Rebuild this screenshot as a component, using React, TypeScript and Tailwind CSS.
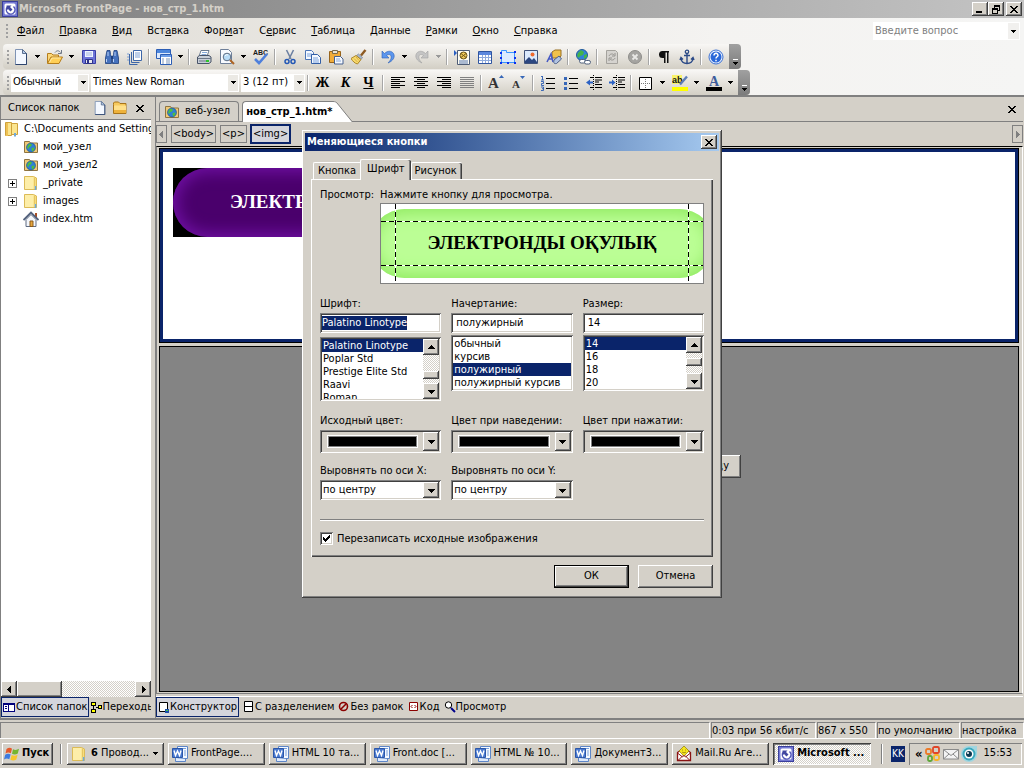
import { useState } from 'react'
import type { ReactNode } from 'react'
import clsx from 'clsx'

const RAISED =
  'bg-[#d4d0c8] shadow-[inset_-1px_-1px_#404040,inset_1px_1px_#fff,inset_-2px_-2px_#808080]'
const SUNKEN =
  'p-[2px] shadow-[inset_1px_1px_#808080,inset_-1px_-1px_#fff,inset_2px_2px_#404040,inset_-2px_-2px_#d4d0c8]'
const CHECKER =
  'bg-[repeating-conic-gradient(#fff_0_25%,#d4d0c8_0_50%)] bg-[length:2px_2px]'

function Svg({ size = 16, children }: { size?: number; children: ReactNode }) {
  return (
    <svg width={size} height={size} viewBox="0 0 16 16" fill="none" className="shrink-0" aria-hidden="true">
      {children}
    </svg>
  )
}

function Arrow({ dir = 'down', color = '#000' }: { dir?: 'up' | 'down' | 'left' | 'right'; color?: string }) {
  const paths = {
    down: 'M0 2h7v1H6v1H5v1H4v1H3V5H2V4H1V3H0z',
    up: 'M3 1h1v1h1v1h1v1h1v1H0V4h1V3h1V2h1z',
    left: 'M5 0v7H4V6H3V5H2V4H1V3h1V2h1V1h1V0z',
    right: 'M2 0v7h1V6h1V5h1V4h1V3H5V2H4V1H3V0z',
  }
  return (
    <svg width="7" height="7" viewBox="0 0 7 7" shapeRendering="crispEdges" className="shrink-0" aria-hidden="true">
      <path d={paths[dir]} fill={color} />
    </svg>
  )
}

function SmallArrow({ color = '#000' }: { color?: string }) {
  return (
    <svg width="5" height="3" viewBox="0 0 5 3" shapeRendering="crispEdges" className="shrink-0" aria-hidden="true">
      <path d="M0 0h5v1H4v1H3v1H2V2H1V1H0z" fill={color} />
    </svg>
  )
}

function Cross() {
  return (
    <svg width="8" height="7" viewBox="0 0 8 7" shapeRendering="crispEdges" aria-hidden="true">
      <path
        d="M0 0h2v1h1v1h2V1h1V0h2v1H7v1H6v1H5v1h1v1h1v1h1v1H6V6H5V5H3v1H2v1H0V6h1V5h1V4h1V3H2V2H1V1H0z"
        fill="#000"
      />
    </svg>
  )
}

const FOLDER = (
  <>
    <path d="M1.500 4.500V3l1-1h4l1.500 1.500h6v10h-12.500z" fill="#f7c95c" stroke="#a8741b" />
    <path d="M2 5.500h12v7.500H2z" fill="#ffe08a" />
    <path d="M2 10h12v3H2z" fill="#eeb23b" />
  </>
)

const PAGE = (
  <>
    <path d="M2.500 .5h7l4 4v11h-11z" fill="#f4f8ff" stroke="#7f93b4" />
    <path d="M9.500 .5v4h4z" fill="#b8cdec" stroke="#5c708f" />
    <path d="M13.500 4.500v11h-11" stroke="#2e456e" />
  </>
)

const GLOBE = (
  <>
    <circle cx="8" cy="8.500" r="4.500" fill="#2f7fd6" stroke="#134a8c" strokeWidth=".6" />
    <path d="M5 6l2-1.500 2 1-1 2-2 .5-.5 2-1.500-1zM8.500 9l3-.5-.5 2.500-2 1.500z" fill="#4fbf3d" />
  </>
)

const icons: Record<string, ReactNode> = {
  page: PAGE,
  folder: FOLDER,
  open: (
    <>
      <path d="M.5 14V4.500h4l1.500 1.500h5.500v2" fill="#fbd779" stroke="#b57d1c" />
      <path d="M.5 14.500l3.500-6.500h11.500l-3.500 6.500z" fill="#ffcf56" stroke="#b57d1c" />
      <path d="M2.500 13.500l2.500-4.500h8.500" stroke="#ffe9a6" />
      <path d="M8 3.500c2-2.500 4-2 5.500 0M14.500 1v3.500H11" stroke="#6f7886" />
    </>
  ),
  save: (
    <>
      <path d="M1.500 1.500h13v13h-12l-1-1z" fill="#6d74d8" stroke="#3a3fa6" />
      <path d="M4 2h8v6H4z" fill="#eef3ff" />
      <path d="M5 4h6M5 6h6" stroke="#a3b2de" />
      <path d="M4.500 10.500h7v4h-7z" fill="#e8e8f0" stroke="#2d3288" />
      <path d="M6 11h2v3H6z" fill="#2d3288" />
    </>
  ),
  find: (
    <>
      <path d="M3 1.500h3l.5 4 1 2.500v6.500h-6V9zM10 1.500h3L14.500 9v5.500h-6V8l1-2.500z" fill="#4672bd" stroke="#1d3f7d" strokeWidth=".8" />
      <path d="M7 7h2v3H7z" fill="#1d3f7d" />
      <path d="M2.500 10v3M9.500 10v3M4 3v4M11 3v4" stroke="#b9d1f7" />
    </>
  ),
  pages: (
    <>
      <path d="M6.500 1.500h8v10h-8z" fill="#fff" stroke="#3d66a8" />
      <path d="M4.500 3v10.500h8M2.500 5v10.500h8" stroke="#3d66a8" />
      <path d="M8 4h5M8 6h5M8 8h5M0 5h2M0 8h2M0 11h2" stroke="#7fa0d4" />
    </>
  ),
  layoutPane: (
    <>
      <path d="M.5 .5h14v9H.5z" fill="#dce9fc" stroke="#2b5db5" />
      <path d="M1 1h13v3H1z" fill="#4c86dc" />
      <path d="M4.500 5.500h11v10h-11z" fill="#fff" stroke="#2b5db5" />
      <path d="M5 6h10v2H5z" fill="#6d9ee8" />
      <path d="M6 10h2M10 10h4M6 12h2M10 12h4M6 14h2M10 14h4" stroke="#7d95ba" />
    </>
  ),
  print: (
    <>
      <path d="M5 1.500h8l-2 6H3z" fill="#fff" stroke="#6a7a90" />
      <path d="M6 3.500h5M5.500 5.500h5" stroke="#86a9d8" />
      <path d="M1.500 8l2-1.500h9.500l2 1.500v5l-2 1.500H1.500z" fill="#c9cfd8" stroke="#495468" />
      <path d="M2 9.500h13M3 12h7" stroke="#6c7787" />
      <path d="M10 11h3v2h-3z" fill="#2fc62c" />
    </>
  ),
  preview: (
    <>
      <path d="M1.500 .5h8l3 3v11h-11z" fill="#f7faff" stroke="#6e7f99" />
      <circle cx="8" cy="8" r="3.800" fill="#b7dbf7" stroke="#5c6d84" />
      <path d="M11 11l4 4" stroke="#ad6424" strokeWidth="2" />
      <path d="M6 7c1-1.500 2-1.500 3-1" stroke="#fff" />
    </>
  ),
  spell: (
    <>
      <text x="0" y="6" fontSize="7" fontWeight="bold" fill="#1a1a1a" fontFamily="Liberation Sans, sans-serif">
        ABC
      </text>
      <path d="M2 10l4 4L14 5" stroke="#4f80dc" strokeWidth="2.600" />
    </>
  ),
  cut: (
    <>
      <path d="M4.500 1l4.500 9M11.500 1L7 10" stroke="#6f82a3" strokeWidth="1.600" />
      <circle cx="5" cy="12.500" r="2" stroke="#2458b5" strokeWidth="1.500" />
      <circle cx="11" cy="12.500" r="2" stroke="#2458b5" strokeWidth="1.500" />
    </>
  ),
  copy: (
    <>
      <path d="M.5 1.500h6l2 2v7h-8z" fill="#f5f9ff" stroke="#4c75b6" />
      <path d="M2 5h5M2 7h5" stroke="#7ba2dd" />
      <path d="M6.500 5.500h6l3 3v6h-9z" fill="#f5f9ff" stroke="#335fa6" />
      <path d="M8 9h5M8 11h6M8 13h6" stroke="#7ba2dd" />
    </>
  ),
  paste: (
    <>
      <path d="M1.500 2.500h11v11h-11z" fill="#f0ac3a" stroke="#98641a" />
      <path d="M4.500 1.500h5v3h-5z" fill="#e9e4d6" stroke="#7b6b4b" />
      <path d="M6.500 7.500h6l2.500 2.500v5h-8.500z" fill="#f5f9ff" stroke="#46618f" />
      <path d="M8 10h4M8 12h5" stroke="#8baada" />
    </>
  ),
  brush: (
    <>
      <path d="M14.500 1L10 6.500" stroke="#8d5a22" strokeWidth="2.400" />
      <path d="M7.500 5l4 3.500-1.500 2-4.500-4z" fill="#a9b6ca" stroke="#66738a" strokeWidth=".6" />
      <path d="M5 6.500l5 4-3.500 4.500c-2.500-.5-5-3-6.500-5.500z" fill="#f9dc6d" stroke="#ab8326" />
      <path d="M3 9.500l3.500 3.500M5 8l3 3.500" stroke="#d6ab45" />
    </>
  ),
  undo: (
    <path d="M2 2v7h7L6.500 6.500C9 4.500 12 5.500 11 9.500c-.4 1.500-1.500 3-3 4.500C13 12 15.500 8 13.500 4.500 11.500 1.500 7.500 1.500 4.500 4.500z" fill="#5c96ee" stroke="#2c5fb5" strokeWidth=".6" />
  ),
  redo: (
    <path d="M14 2v7H7l2.500-2.500C7 4.500 4 5.500 5 9.500c.4 1.500 1.500 3 3 4.500C3 12 .5 8 2.500 4.500 4.500 1.500 8.500 1.500 11.500 4.500z" fill="#c4c4c4" stroke="#a2a2a2" strokeWidth=".6" />
  ),
  component: (
    <>
      <path d="M3.500 1.500h12v14h-12z" fill="#fffdf2" stroke="#4d5b74" />
      <path d="M0 1l3 3-3 3z" fill="#2a5fc2" />
      <path d="M5 12h9M5 14h9" stroke="#5676ae" />
      <circle cx="9.500" cy="6.500" r="3.500" fill="#efc95a" stroke="#6d5519" />
      <path d="M7 4.500l5 4M12 4.500l-5 4" stroke="#6d5519" />
    </>
  ),
  table: (
    <>
      <path d="M1.500 2.500h13v12h-13z" fill="#fff" stroke="#2f55a0" />
      <path d="M2 3h12v3H2z" fill="#5c88dd" />
      <path d="M2 8.500h12M2 11.500h12M5.500 6v8M8.500 6v8M11.500 6v8" stroke="#8fabdd" />
    </>
  ),
  layer: (
    <>
      <path d="M1.500 4.500V1.500h5v2h8v10h-13z" fill="#dcebff" stroke="#3a96ff" />
      <path d="M0 3h2v2H0zM14 2h2v2h-2zM0 13h2v2H0zM7 13h2v2H7zM14 13h2v2h-2zM14 8h2v2h-2zM0 8h2v2H0z" fill="#0a2ff0" />
    </>
  ),
  picture: (
    <>
      <path d="M1.500 1.500h13v13h-13z" fill="#dceafd" stroke="#41537a" />
      <circle cx="9.500" cy="5.500" r="2" fill="#ef6a2e" />
      <path d="M2 12l4-4 3 3 2-2 3 4v1H2z" fill="#2c4780" />
    </>
  ),
  drawing: (
    <>
      <path d="M6 3l3-2h6v6l-2 2H6z" fill="#f1c24c" stroke="#997022" />
      <path d="M1 13L5 5l2 8M2.500 10h4" stroke="#4a5cc4" strokeWidth="1.600" />
      <path d="M8 11l5-4 2.500 3-5 4.500c-3 .5-3-1-2.500-3.500z" fill="#b2c4e2" stroke="#4c5f87" />
    </>
  ),
  hyperlink: (
    <>
      <circle cx="7" cy="6" r="5.500" fill="#3183d8" stroke="#205a9a" />
      <path d="M3 4l3-3 3 2-1 3-3 1-1 2-2-2zM9 6l3-1v3l-3 2z" fill="#43b34a" />
      <rect x="4.500" y="10.500" width="6" height="3.500" rx="1.700" fill="#fff" stroke="#4f607c" />
      <rect x="9.500" y="11.500" width="6" height="3.500" rx="1.700" fill="#fff" stroke="#4f607c" />
    </>
  ),
  refresh: (
    <>
      <path d="M2.500 1.500h9l2 2v11h-11z" fill="#d5d3cf" stroke="#a4a29d" />
      <path d="M5 7c1-2.500 4-2.500 5-1M11 4v3H8M11 9c-1 2.500-4 2.500-5 1M5 12V9h3" stroke="#969490" />
    </>
  ),
  stop: (
    <>
      <circle cx="8" cy="8" r="6.500" fill="#a5a4a1" stroke="#8e8d8a" />
      <path d="M5.500 5.500l5 5M10.500 5.500l-5 5" stroke="#e9e8e6" strokeWidth="1.800" />
    </>
  ),
  pilcrow: (
    <path d="M13 2H6.500a3.500 3.500 0 000 7H8v5h1.500V3.500H11V14h1.500V3.500H13z" fill="#111" />
  ),
  anchor: (
    <>
      <circle cx="8" cy="2.800" r="1.700" stroke="#2b4a87" strokeWidth="1.300" />
      <path d="M8 4.500v10M5 6.500h6M2 9.500c.5 3.500 3 5 6 5s5.500-1.500 6-5M1 11l1-2.500L4 10.500M15 11l-1-2.500-2 2" stroke="#2b4a87" strokeWidth="1.400" />
    </>
  ),
  help: (
    <>
      <circle cx="8" cy="8" r="7" fill="#eef4ff" stroke="#3a70d2" />
      <circle cx="8" cy="8" r="5.500" fill="#2a68d8" />
      <path d="M6 6.500c0-3 4.200-2.700 4 0-.1 1.300-2 1.300-2 3M8 10.700v1.600" stroke="#fff" strokeWidth="1.500" />
    </>
  ),
  alignLeft: <path d="M1 2.500h14M1 4.500h9M1 6.500h14M1 8.500h9M1 10.500h14M1 12.500h9" stroke="#000" />,
  alignCenter: <path d="M1 2.500h14M4 4.500h8M1 6.500h14M4 8.500h8M1 10.500h14M4 12.500h8" stroke="#000" />,
  alignRight: <path d="M1 2.500h14M6 4.500h9M1 6.500h14M6 8.500h9M1 10.500h14M6 12.500h9" stroke="#000" />,
  justify: <path d="M1 2.500h14M1 4.500h14M1 6.500h14M1 8.500h14M1 10.500h14M1 12.500h14" stroke="#808080" />,
  grow: (
    <>
      <text x="0" y="13" fontSize="15" fontWeight="bold" fill="#333" fontFamily="Liberation Serif, serif">
        А
      </text>
      <path d="M11 3l2.500-3L16 3z" fill="#3767b8" />
    </>
  ),
  shrink: (
    <>
      <text x="1" y="13" fontSize="11" fontWeight="bold" fill="#333" fontFamily="Liberation Serif, serif">
        А
      </text>
      <path d="M9 1l2.500 3L14 1z" fill="#3767b8" />
    </>
  ),
  numbered: (
    <>
      <path d="M6 3.500h9M6 8.500h9M6 13.500h9" stroke="#000" />
      <path d="M2.500 1v4M1 1.500h1.500M1 5h3M1 6.500h2.500v2H1.500v2H4M1 12h2.500v3.500H1M2 13.700h1.500" stroke="#2c5db3" strokeWidth=".9" />
    </>
  ),
  bulleted: (
    <>
      <path d="M6 3.500h9M6 8.500h9M6 13.500h9" stroke="#000" />
      <path d="M1 2h3v3H1zM1 7h3v3H1zM1 12h3v3H1z" fill="#3767b8" />
    </>
  ),
  outdent: (
    <>
      <path d="M4 2.500h4M9 2.500h7M9 5h7M9 7h4M9 9.500h7M4 12.500h4M9 12.500h7" stroke="#000" strokeWidth="1.200" />
      <path d="M7.500 0v16" stroke="#000" strokeDasharray="1 1" />
      <path d="M0 7.500l4-3v2h3v2H4v2z" fill="#2c62c4" />
    </>
  ),
  indent: (
    <>
      <path d="M4 2.500h4M9 2.500h7M9 5h7M9 7h4M9 9.500h7M4 12.500h4M9 12.500h7" stroke="#000" strokeWidth="1.200" />
      <path d="M7.500 0v16" stroke="#000" strokeDasharray="1 1" />
      <path d="M6.500 7.500l-3.500-3v2H0v2h3v2z" fill="#2c62c4" />
    </>
  ),
  borders: (
    <>
      <path d="M1.500 2.500h12v12h-12z" fill="#fff" stroke="#000" />
      <path d="M7.500 4v9M3 8.500h9" stroke="#777" strokeDasharray="1 1" />
    </>
  ),
  highlight: (
    <>
      <path d="M0 0h10v9H0z" fill="#f8f36a" />
      <text x="0" y="8" fontSize="9" fill="#111" fontFamily="Liberation Sans, sans-serif">
        ab
      </text>
      <path d="M15 1.500L8 9.500" stroke="#5c7db8" strokeWidth="2.400" />
      <path d="M0 12h16v4H0z" fill="#ffff00" />
    </>
  ),
  fontColor: (
    <>
      <text x="3" y="11" fontSize="14" fontWeight="bold" fill="#3d5c9c" fontFamily="Liberation Serif, serif">
        А
      </text>
      <path d="M0 12h16v4H0z" fill="#000" />
    </>
  ),
  site: (
    <>
      <path d="M1.500 4V2.500h5l1 1.500h7v9.500h-13z" fill="#efca78" stroke="#8f7440" />
      {GLOBE}
    </>
  ),
  closedFolder: (
    <>
      <path d="M1.500 1.500h9l3 1.500v11.500h-12z" fill="#f8dd7c" stroke="#dcbb57" />
      <path d="M2 2h8.500v12H2z" fill="#fdeea9" />
      <path d="M11.500 3v8" stroke="#e5c662" />
      <path d="M12.500 11v4" stroke="#6fa9d6" strokeWidth="1.600" />
    </>
  ),
  openFolder: (
    <>
      <path d="M1.500 1.500h6v13h-6zM7.500 2.500h6v11h-6z" fill="#fbe58f" stroke="#cfa23c" />
      <path d="M2 2h2v13H2z" fill="#eec255" />
      <path d="M11 12v3.500" stroke="#6fa9d6" strokeWidth="2" />
    </>
  ),
  home: (
    <>
      <path d="M3 8.500v7h10v-7L8 3.500z" fill="#f3f6fb" stroke="#5e6b82" />
      <path d="M12 2h2v5h-2z" fill="#a84f23" />
      <path d="M.5 9L8 1.500 15.500 9" stroke="#52617c" strokeWidth="1.800" />
      <path d="M7 10h3v5.500H7z" fill="#e7a63b" stroke="#8a5a1c" />
    </>
  ),
  word: (
    <>
      <path d="M5.500 .5h10v12h-10z" fill="#f5f9ff" stroke="#5d86c8" />
      <path d="M7 2.500h7M12 5h2M12 7h2M12 9h2" stroke="#7ba2dd" />
      <path d="M3.500 12v3.500h10V13" fill="#dfeafb" stroke="#5d86c8" />
      <path d="M.5 2.500h10v9H.5z" fill="#4a7ad0" stroke="#2b56a8" />
      <path d="M2 4.500L3.500 9.500 5.500 5l2 4.500L9 4.500" stroke="#fff" strokeWidth="1.400" />
    </>
  ),
  frontPage: (
    <>
      <rect x=".5" y=".5" width="15" height="15" fill="#7479d2" stroke="#3a3f9c" />
      <rect x="2.500" y="2.500" width="11" height="11" rx="1.500" fill="#fff" />
      <path d="M11.500 5.500a4.300 4.300 0 11-6.500 1" stroke="#5157b8" strokeWidth="1.500" />
      <path d="M4.500 4.500h5L8 6l2.500 2.500-2 2L6 8 4.500 9.500z" fill="#41479f" />
    </>
  ),
  mailAgent: (
    <>
      <path d="M1.500 6.500L8 2l6.500 4.500v8h-13z" fill="#fff" stroke="#8a1414" strokeWidth="1.300" />
      <path d="M8 0l5 5-5 5-5-5z" fill="#f5e61e" stroke="#8f7b0e" strokeWidth=".7" />
      <path d="M1.500 15l5-5h3l5 5M1.500 7l5 4M14.500 7l-5 4" stroke="#8a1414" />
      <path d="M6 4h1M9 4h1M6 6c1 1 3 1 4 0" stroke="#8f7b0e" strokeWidth=".8" />
    </>
  ),
  windows: (
    <>
      <path d="M2.500 3c2-1.500 4-1.500 5.500-.3L6.800 7.300C5 6.200 3.500 6.300 1.500 7.500z" fill="#e5592b" />
      <path d="M9 3.300c2 1 4 .8 6-.5l-1.200 4.700c-2 1.200-3.800 1.300-5.800.2z" fill="#74b52f" />
      <path d="M1.200 8.700c2-1.200 3.600-1.200 5.400-.2l-1.300 4.800C3.500 12.200 2 12.300 0 13.500z" fill="#3d7be0" />
      <path d="M7.700 9c2 1 3.800.9 5.900-.3l-1.300 4.800c-2 1.200-3.900 1.300-5.900.2z" fill="#f6c62b" />
    </>
  ),
  office: (
    <>
      <rect x="1" y="3" width="5" height="5" rx="1.500" stroke="#ec7a28" strokeWidth="1.800" />
      <rect x="8" y="1" width="6" height="6" rx="1.500" stroke="#e0452a" strokeWidth="1.800" />
      <rect x="3" y="10" width="4" height="5" rx="1.500" stroke="#5fa63a" strokeWidth="1.800" />
      <rect x="9" y="9" width="5" height="5" rx="1.500" stroke="#f5b52a" strokeWidth="1.800" />
    </>
  ),
  envelope: (
    <>
      <path d="M.5 3.500h15v9.500H.5z" fill="#f3f3f3" stroke="#8a8a8a" />
      <path d="M.5 3.500L8 9.500l7.500-6M.5 13L6 8M15.500 13L10 8" stroke="#8a8a8a" />
    </>
  ),
  eye: (
    <>
      <path d="M8 0h8v8a8 8 0 11-8-8z" fill="#9fd5e0" />
      <circle cx="8" cy="8" r="6.500" fill="#3aa9be" />
      <circle cx="8" cy="8" r="4.500" fill="#fff" />
      <circle cx="8" cy="8" r="3" fill="#0c3a52" />
      <circle cx="7" cy="7" r="1" fill="#fff" />
    </>
  ),
}

// '|' is a separator, 'v' the drop-down arrow of the button before it
const STANDARD: [string, string][] = [
  ['page', 'Создать'], ['v', 'Создать: список'], ['open', 'Открыть'], ['v', 'Открыть: список'],
  ['save', 'Сохранить'], ['find', 'Найти'], ['pages', 'Опубликовать'], ['|', ''],
  ['layoutPane', 'Область'], ['v', 'Область: список'], ['|', ''],
  ['print', 'Печать'], ['preview', 'Просмотр'], ['v', 'Просмотр: список'], ['spell', 'Орфография'], ['|', ''],
  ['cut', 'Вырезать'], ['copy', 'Копировать'], ['paste', 'Вставить'], ['brush', 'Формат по образцу'], ['|', ''],
  ['undo', 'Отменить'], ['v', 'Отменить: список'], ['redo', 'Вернуть'], ['vd', 'Вернуть: список'], ['|', ''],
  ['component', 'Веб-компонент'], ['table', 'Таблица'], ['layer', 'Слой'], ['picture', 'Рисунок'],
  ['drawing', 'Рисование'], ['|', ''], ['hyperlink', 'Гиперссылка'], ['|', ''],
  ['refresh', 'Обновить'], ['stop', 'Остановить'], ['|', ''],
  ['pilcrow', 'Показать все'], ['anchor', 'Закладка'], ['|', ''], ['help', 'Справка'],
]

const FORMATTING: [string, string][] = [
  ['|', ''], ['bold', 'Полужирный'], ['italic', 'Курсив'], ['underline', 'Подчеркнутый'], ['|', ''],
  ['alignLeft', 'По левому краю'], ['alignCenter', 'По центру'], ['alignRight', 'По правому краю'],
  ['justify', 'По ширине'], ['|', ''], ['grow', 'Увеличить'], ['shrink', 'Уменьшить'], ['|', ''],
  ['numbered', 'Нумерация'], ['bulleted', 'Маркеры'], ['outdent', 'Уменьшить отступ'],
  ['indent', 'Увеличить отступ'], ['|', ''], ['borders', 'Границы'], ['v', 'Границы: список'],
  ['highlight', 'Выделение'], ['v', 'Выделение: список'], ['fontColor', 'Цвет шрифта'], ['v', 'Цвет: список'],
]

const LETTERS: Record<string, ReactNode> = {
  bold: <span>Ж</span>,
  italic: <span className="italic">К</span>,
  underline: <span className="underline">Ч</span>,
}

function ToolItems({ items }: { items: [string, string][] }) {
  return (
    <>
      {items.map(([id, label], i) => {
        if (id === '|') {
          return (
            <div key={i} className="flex w-[6px] shrink-0 justify-center">
              <div className="h-4 w-[2px] border-r border-white bg-[#a6a6a6]" />
            </div>
          )
        }
        if (id === 'v' || id === 'vd') {
          return (
            <button key={i} aria-label={label} className="flex h-5 w-[11px] shrink-0 items-center justify-center">
              <SmallArrow color={id === 'vd' ? '#999' : '#000'} />
            </button>
          )
        }
        return (
          <button
            key={i}
            aria-label={label}
            className="flex h-5 w-[23px] shrink-0 items-center justify-center font-['Liberation_Serif',serif] text-[14px] font-bold"
          >
            {LETTERS[id] ?? <Svg>{icons[id]}</Svg>}
          </button>
        )
      })}
    </>
  )
}

function Grip() {
  return (
    <div className="flex w-[6px] shrink-0 flex-col items-end gap-[2px]">
      {[0, 1, 2, 3].map((i) => (
        <span key={i} className="h-[2px] w-[2px] bg-[#a0a0a0]" />
      ))}
    </div>
  )
}

function Toolbar({ children }: { children: ReactNode }) {
  return (
    <div className="ml-[3px] flex h-[25px] w-fit items-center overflow-hidden rounded bg-linear-to-b from-[#f8f7f5] to-[#d3cfc5]">
      {children}
      <button
        aria-label="Параметры панели инструментов"
        className="ml-[2px] flex h-full w-3 shrink-0 flex-col items-center justify-end gap-[2px] bg-linear-to-b from-[#a0a0a0] to-[#7c7c7c] pb-1"
      >
        <span className="h-px w-[5px] bg-white" />
        <SmallArrow />
      </button>
    </div>
  )
}

function ToolSelect({ label, value, className }: { label: string; value: string; className: string }) {
  return (
    <div className={clsx('relative flex h-[18px] shrink-0 items-center bg-white', className)}>
      <select aria-label={label} className="h-full w-full appearance-none bg-transparent pl-[2px] pr-3 text-[11px]">
        <option>{value}</option>
      </select>
      <span className="pointer-events-none absolute inset-y-px right-px flex w-[10px] items-center justify-center bg-[#ebe9e4]">
        <SmallArrow />
      </span>
    </div>
  )
}

const MENU: [string, string, string][] = [
  ['', 'Ф', 'айл'], ['', 'П', 'равка'], ['', 'В', 'ид'], ['Вст', 'а', 'вка'], ['Фор', 'м', 'ат'],
  ['С', 'е', 'рвис'], ['', 'Т', 'аблица'], ['', 'Д', 'анные'], ['', 'Р', 'амки'], ['', 'О', 'кно'],
  ['', 'С', 'правка'],
]

function Header() {
  return (
    <header className="shrink-0">
      <div className="flex h-[18px] items-center bg-linear-to-r from-[#808080] to-[#c4c4c4] px-[2px]">
        <Svg>{icons.frontPage}</Svg>
        <h1 className="ml-px text-[11px] font-bold text-[#d4d0c8]">Microsoft FrontPage - нов_стр_1.htm</h1>
        <div className="ml-auto flex">
          <button aria-label="Свернуть" className={clsx('flex h-[14px] w-4 items-end pb-[3px] pl-1', RAISED)}>
            <span className="h-[2px] w-[6px] bg-black" />
          </button>
          <button aria-label="Восстановить" className={clsx('flex h-[14px] w-4 items-center justify-center', RAISED)}>
            <svg width="9" height="9" viewBox="0 0 9 9" fill="none" shapeRendering="crispEdges" aria-hidden="true">
              <path d="M2 0h6v2H2zM0 3h6v2H0z" fill="#000" />
              <path d="M2.500 1v2M7.500 1v4.500H6M.5 4v4.500h5V4" stroke="#000" />
            </svg>
          </button>
          <button aria-label="Закрыть" className={clsx('ml-[2px] flex h-[14px] w-4 items-center justify-center', RAISED)}>
            <Cross />
          </button>
        </div>
      </div>
      <div className="border-b-2 border-[#808080] bg-linear-to-r from-[#dfdcd5] via-[#f4f3f1] via-70% to-[#f5f5f4]">
        <div className="flex h-[26px] items-center pl-[2px] pr-1">
          <Grip />
          <nav className="ml-[9px] flex gap-[15px]">
            {MENU.map(([before, key, after]) => (
              <button key={before + key + after}>
                {before}
                <u>{key}</u>
                {after}
              </button>
            ))}
          </nav>
          <div className="ml-auto flex h-[18px] w-[147px] bg-white">
            <input
              aria-label="Введите вопрос"
              placeholder="Введите вопрос"
              className="min-w-0 flex-1 pl-[2px] text-[11px] outline-none placeholder:text-[#808080]"
            />
            <button aria-label="Список вопросов" className="m-px flex w-[11px] items-center justify-center bg-[#f1f0ee]">
              <SmallArrow />
            </button>
          </div>
        </div>
        <Toolbar>
          <Grip />
          <ToolItems items={STANDARD} />
        </Toolbar>
        <div className="mt-px">
          <Toolbar>
            <Grip />
            <div className="ml-[2px] flex gap-[2px]">
              <ToolSelect label="Стиль" value="Обычный" className="w-[78px]" />
              <ToolSelect label="Шрифт" value="Times New Roman" className="w-[148px]" />
              <ToolSelect label="Размер" value="3 (12 пт)" className="w-[64px]" />
            </div>
            <ToolItems items={FORMATTING} />
          </Toolbar>
        </div>
      </div>
    </header>
  )
}

const TREE = [
  { icon: 'site', name: 'мой_узел' },
  { icon: 'site', name: 'мой_узел2' },
  { icon: 'closedFolder', name: '_private', expandable: true },
  { icon: 'closedFolder', name: 'images', expandable: true },
  { icon: 'home', name: 'index.htm' },
]

function FolderPane() {
  return (
    <aside className="flex w-[151px] shrink-0 flex-col overflow-hidden border-l border-[#808080] bg-white">
      <div className="flex h-[23px] shrink-0 items-center border-b border-[#808080] bg-[#d4d0c8] px-[7px]">
        <h2>Список папок</h2>
        <button aria-label="Новая страница" className="ml-auto">
          <Svg size={14}>{icons.page}</Svg>
        </button>
        <button aria-label="Новая папка" className="ml-[5px]">
          <Svg>{icons.folder}</Svg>
        </button>
        <button aria-label="Закрыть" className="ml-2">
          <Cross />
        </button>
      </div>
      <div className="min-h-0 flex-1 overflow-hidden">
        <div className="flex h-[18px] items-center gap-1 whitespace-nowrap pl-[3px]">
          <Svg>{icons.openFolder}</Svg>
          <span className="min-w-0 overflow-hidden">C:\Documents and Setting</span>
        </div>
        <ul>
          {TREE.map((item) => (
            <li key={item.name} className="flex h-[18px] items-center pl-[7px]">
              {item.expandable ? (
                <button
                  aria-label="Развернуть"
                  className="flex h-[9px] w-[9px] items-center justify-center border border-[#808080]"
                >
                  <svg width="5" height="5" viewBox="0 0 5 5" shapeRendering="crispEdges" className="shrink-0" aria-hidden="true">
                    <path d="M2 0h1v2h2v1H3v2H2V3H0V2h2z" fill="#000" />
                  </svg>
                </button>
              ) : (
                <span className="w-[9px]" />
              )}
              <span className="ml-[6px] mr-1">
                <Svg>{icons[item.icon]}</Svg>
              </span>
              {item.name}
            </li>
          ))}
        </ul>
      </div>
      <div className={clsx('flex h-4 shrink-0', CHECKER)}>
        <button aria-label="Влево" className={clsx('flex w-4 items-center justify-center', RAISED)}>
          <Arrow dir="left" />
        </button>
        <div className={clsx('w-[45px]', RAISED)} />
        <button aria-label="Вправо" className={clsx('ml-auto flex w-4 items-center justify-center', RAISED)}>
          <Arrow dir="right" />
        </button>
      </div>
      <div className="flex h-[21px] shrink-0 whitespace-nowrap bg-[#d4d0c8]">
        <button className="flex h-5 shrink-0 items-center gap-px border border-[#0a246a] bg-[#d4d5dc] px-px">
          <svg width="12" height="9" viewBox="0 0 12 9" shapeRendering="crispEdges" aria-hidden="true">
            <path d="M0 0h12v9H0z" fill="#00007b" />
            <path d="M1 2h4v6H1zM6 2h5v6H6z" fill="#fff" />
            <path d="M2 3h2v1H2zM2 5h2v1H2z" fill="#00007b" />
          </svg>
          Список папок
        </button>
        <button className="ml-[2px] flex h-5 min-w-0 items-center overflow-hidden">
          <svg width="11" height="11" viewBox="0 0 11 11" shapeRendering="crispEdges" className="shrink-0" aria-hidden="true">
            <path d="M0 0h5v4H0zM0 7h5v4H0zM7 3h4v4H7z" fill="#000" />
            <path d="M1 1h3v2H1zM1 8h3v2H1zM8 4h2v2H8z" fill="#ff0" />
            <path d="M2 4h1v3H2zM5 5h2v1H5z" fill="#000" />
          </svg>
          Переходы
        </button>
      </div>
    </aside>
  )
}

const VIEWS: [string, ReactNode][] = [
  ['Конструктор', <><path d="M1.500 1.500h8v9h-8z" fill="#fff" stroke="#000" /><path d="M7 8h4v4H7z" fill="#1d4fa8" /><path d="M8 9h2v1H8z" fill="#3fc13f" /></>],
  ['С разделением', <path d="M1.500 .5h8v10h-8zM1.500 5.500h8" fill="#fff" stroke="#000" />],
  ['Без рамок', <><circle cx="5.500" cy="5.500" r="4" stroke="#8b0000" strokeWidth="1.600" /><path d="M3 8l5-5" stroke="#8b0000" strokeWidth="1.600" /></>],
  ['Код', <><path d="M1.500 1.500h8v8h-8z" fill="#fff" stroke="#8b0000" /><path d="M4.500 4L3 5.500 4.500 7M6.500 4L8 5.500 6.500 7" stroke="#8b0000" /></>],
  ['Просмотр', <><circle cx="4.500" cy="4" r="3.200" fill="#fff" stroke="#000" /><path d="M7 7l4 4" stroke="#00008b" strokeWidth="2" /></>],
]

function Editor() {
  return (
    <main className="ml-1 flex min-w-0 flex-1 flex-col border-l border-[#808080] pr-px">
      <div className="flex h-[25px] shrink-0 items-end border-b border-[#808080] pl-[3px]">
        <button className="flex h-5 items-center rounded-t border border-b-0 border-[#808080] px-1 pr-2">
          <Svg>{icons.site}</Svg>
          <span className="ml-[5px]">веб-узел</span>
        </button>
        <button className="-mb-px ml-[3px] flex h-[21px] items-center rounded-tl border-l border-t border-[#808080] bg-white pl-[3px] font-bold">
          нов_стр_1.htm*
        </button>
        <svg width="20" height="21" viewBox="0 0 20 21" fill="none" className="-mb-px" aria-hidden="true">
          <path d="M0 0c2 0 3 1 4 2l15 19H0z" fill="#fff" />
          <path d="M0 .5c2 0 3 .5 4 1.500l15 18.500" stroke="#808080" />
        </svg>
        <button aria-label="Закрыть документ" className="mb-2 ml-auto mr-[7px]">
          <Cross />
        </button>
      </div>
      <div className="flex h-6 shrink-0 items-center">
        <button aria-label="Назад" className="flex h-[18px] w-[11px] items-center justify-center border border-[#808080]">
          <Arrow dir="left" color="#808080" />
        </button>
        <button className="ml-1 h-[18px] border border-[#808080] px-px">{'<body>'}</button>
        <button className="ml-1 h-[18px] border border-[#808080] px-px">{'<p>'}</button>
        <button className="ml-[3px] h-5 border-2 border-[#0a246a] bg-[#d4d5dc] px-px">{'<img>'}</button>
        <button aria-label="Вперёд" className="ml-auto flex h-[18px] w-[11px] items-center justify-center border border-[#808080]">
          <Arrow dir="right" color="#808080" />
        </button>
      </div>
      <div className="flex min-h-0 flex-1 flex-col border border-t-black border-[#808080] border-r-white py-px pl-[2px] pr-[3px]">
        <div className="h-[195px] shrink-0 overflow-hidden border border-black">
          <div className="h-full border-[3px] border-[#0a246a] bg-white px-[10px] py-4">
            <div className="w-[343px] bg-black">
              <div className="flex h-[69px] items-center justify-center rounded-full bg-[#4a006c] font-['Liberation_Serif',serif] text-[19px] font-bold whitespace-nowrap text-white shadow-[inset_0_0_16px_4px_#7010a4]">
                ЭЛЕКТРОНДЫ ОҚУЛЫҚ
              </div>
            </div>
          </div>
        </div>
        <div className="mt-[3px] flex min-h-0 flex-1 justify-center border border-black bg-[#848484] pt-[108px]">
          <button className={clsx('h-[23px] w-[304px] pr-3 text-right', RAISED)}>ду</button>
        </div>
      </div>
      <div className="mt-[2px] flex h-[22px] shrink-0 items-center gap-1 border-t border-white pb-px">
        {VIEWS.map(([name, icon], i) => (
          <button
            key={name}
            className={clsx(
              'flex h-5 items-center',
              i === 0 && 'border border-[#0a246a] bg-[#d4d5dc] px-px',
            )}
          >
            <svg width="12" height="12" viewBox="0 0 12 12" fill="none" aria-hidden="true">
              {icon}
            </svg>
            {name}
          </button>
        ))}
      </div>
    </main>
  )
}

function ScrollColumn({ space }: { space: string }) {
  return (
    <div className={clsx('flex w-4 shrink-0 flex-col', CHECKER)}>
      <button aria-label="Вверх" className={clsx('flex h-4 shrink-0 items-center justify-center', RAISED)}>
        <Arrow dir="up" />
      </button>
      <div className={space} />
      <div className={clsx('h-2 shrink-0', RAISED)} />
      <button aria-label="Вниз" className={clsx('mt-auto flex h-4 shrink-0 items-center justify-center', RAISED)}>
        <Arrow />
      </button>
    </div>
  )
}

interface PickerProps {
  id: string
  label: string
  options: string[]
  initial: string
  listClass: string
  space?: string
  highlighted?: boolean
}

function Picker({ id, label, options, initial, listClass, space, highlighted }: PickerProps) {
  const [value, setValue] = useState(initial)
  return (
    <div>
      <label htmlFor={id} className="mb-[2px] block leading-[14px]">
        {label}
      </label>
      <div className={clsx('flex h-5 items-center bg-white', SUNKEN)}>
        {highlighted ? (
          <input
            id={id}
            value={value}
            onChange={(e) => setValue(e.target.value)}
            className="field-sizing-content h-[14px] max-w-full bg-[#0a246a] text-white outline-none"
          />
        ) : (
          <input
            id={id}
            value={value}
            onChange={(e) => setValue(e.target.value)}
            className="h-[14px] w-full pl-[3px] outline-none"
          />
        )}
      </div>
      <div className={clsx('flex overflow-hidden bg-white', SUNKEN, listClass)}>
        <div role="listbox" aria-label={label} className="min-w-0 flex-1 overflow-hidden">
          {options.map((o) => (
            <button
              key={o}
              role="option"
              aria-selected={o === value}
              onClick={() => setValue(o)}
              className={clsx(
                'block h-[13px] w-full whitespace-nowrap pl-px text-left leading-[13px]',
                o === value && 'bg-[#0a246a] text-white',
              )}
            >
              {o}
            </button>
          ))}
        </div>
        {space && <ScrollColumn space={space} />}
      </div>
    </div>
  )
}

function ColorPicker({ id, label }: { id: string; label: string }) {
  return (
    <div>
      <label htmlFor={id} className="mb-[2px] block whitespace-nowrap leading-[14px]">
        {label}
      </label>
      <button id={id} className={clsx('flex h-[23px] w-full items-stretch', SUNKEN)}>
        <span className="mx-[5px] my-[3px] flex-1 border border-white bg-black outline-1 -outline-offset-2 outline-[#808080]" />
        <span className={clsx('flex w-4 items-center justify-center', RAISED)}>
          <Arrow />
        </span>
      </button>
    </div>
  )
}

function AxisSelect({ id, label }: { id: string; label: string }) {
  return (
    <div>
      <label htmlFor={id} className="mb-[2px] block whitespace-nowrap leading-[14px]">
        {label}
      </label>
      <div className={clsx('relative h-5 bg-white', SUNKEN)}>
        <select id={id} className="h-full w-full appearance-none pl-px pr-4 outline-none">
          <option>по центру</option>
        </select>
        <span className={clsx('pointer-events-none absolute inset-y-[2px] right-[2px] flex w-4 items-center justify-center', RAISED)}>
          <Arrow />
        </span>
      </div>
    </div>
  )
}

function Preview() {
  return (
    <button className="relative flex h-[81px] w-full items-center justify-center overflow-hidden border border-[#808080] bg-white">
      <span className="-mx-[11px] flex h-[69px] flex-1 shrink-0 items-center justify-center rounded-full bg-[#bbfe95] font-['Liberation_Serif',serif] text-[19px] font-bold whitespace-nowrap shadow-[inset_0_0_16px_4px_#8fe95f]">
        ЭЛЕКТРОНДЫ ОҚУЛЫҚ
      </span>
      <span className="absolute inset-x-0 top-[17px] h-px bg-[repeating-linear-gradient(90deg,#000_0_5px,#fff_5px_8px)]" />
      <span className="absolute inset-x-0 bottom-[17px] h-px bg-[repeating-linear-gradient(90deg,#000_0_5px,#fff_5px_8px)]" />
      <span className="absolute inset-y-0 left-[14px] w-px bg-[repeating-linear-gradient(180deg,#000_0_5px,#fff_5px_8px)]" />
      <span className="absolute inset-y-0 right-[14px] w-px bg-[repeating-linear-gradient(180deg,#000_0_5px,#fff_5px_8px)]" />
    </button>
  )
}

const TAB =
  'rounded-t-[2px] border-l border-t border-white bg-[#d4d0c8] shadow-[inset_-1px_0_#404040,inset_-2px_0_#808080]'

function ButtonsDialog() {
  const [overwrite, setOverwrite] = useState(true)
  return (
    <section
      role="dialog"
      aria-label="Меняющиеся кнопки"
      className={clsx('absolute left-[302px] top-[130px] w-[420px] p-[3px] pb-[10px]', RAISED)}
    >
      <div className="flex h-[18px] items-center bg-linear-to-r from-[#0a246a] to-[#a6caf0] px-[2px]">
        <h2 className="font-bold text-white">Меняющиеся кнопки</h2>
        <button aria-label="Закрыть" className={clsx('ml-auto flex h-[14px] w-4 items-center justify-center', RAISED)}>
          <Cross />
        </button>
      </div>
      <div className="px-[6px] pt-2">
        <div role="tablist" className="flex items-end pl-[2px]">
          <button role="tab" className="h-[17px] rounded-tl-[2px] border-l border-t border-white px-1">
            Кнопка
          </button>
          <button role="tab" aria-selected="true" className={clsx('relative -mb-px h-[21px] px-[6px] pb-[2px]', TAB)}>
            Шрифт
          </button>
          <button role="tab" className={clsx('h-[17px] px-[3px] pr-[5px]', TAB)}>
            Рисунок
          </button>
        </div>
        <div className="border-l border-t border-white pb-3 pl-2 pr-[9px] pt-2 shadow-[inset_-1px_-1px_#404040,inset_-2px_-2px_#808080]">
          <div className="flex">
            <span className="w-[60px] shrink-0 leading-[13px]">Просмотр:</span>
            <div className="min-w-0 flex-1">
              <p className="mb-[2px] leading-[13px]">Нажмите кнопку для просмотра.</p>
              <Preview />
            </div>
          </div>
          <div className="mt-[13px] grid h-[104px] grid-cols-3 gap-[10px]">
            <Picker
              id="font"
              label="Шрифт:"
              initial="Palatino Linotype"
              options={['Palatino Linotype', 'Poplar Std', 'Prestige Elite Std', 'Raavi', 'Roman']}
              listClass="mt-1 h-16"
              space="h-4"
              highlighted
            />
            <Picker
              id="style"
              label="Начертание:"
              initial="полужирный"
              options={['обычный', 'курсив', 'полужирный', 'полужирный курсив']}
              listClass="mt-[2px] h-14"
            />
            <Picker
              id="size"
              label="Размер:"
              initial="14"
              options={['14', '16', '18', '20']}
              listClass="mt-[2px] h-14"
              space="h-[5px]"
            />
          </div>
          <div className="mt-[13px] grid grid-cols-3 gap-[10px]">
            <ColorPicker id="color" label="Исходный цвет:" />
            <ColorPicker id="hover-color" label="Цвет при наведении:" />
            <ColorPicker id="pressed-color" label="Цвет при нажатии:" />
          </div>
          <div className="mt-[11px] grid grid-cols-3 gap-[10px]">
            <AxisSelect id="axis-x" label="Выровнять по оси X:" />
            <AxisSelect id="axis-y" label="Выровнять по оси Y:" />
          </div>
          <hr className="mt-[19px] h-[2px] border-b border-t border-b-white border-t-[#808080]" />
          <label className="mt-[11px] flex items-center gap-1 leading-[13px]">
            <span className={clsx('relative flex h-[13px] w-[13px] bg-white', SUNKEN)}>
              <input
                type="checkbox"
                checked={overwrite}
                onChange={(e) => setOverwrite(e.target.checked)}
                className="peer h-[9px] w-[9px] appearance-none"
              />
              <svg
                viewBox="0 0 7 7"
                shapeRendering="crispEdges"
                className="pointer-events-none absolute left-[3px] top-[3px] hidden h-[7px] w-[7px] peer-checked:block"
                aria-hidden="true"
              >
                <path d="M0 2h1v1h1v1h1V3h1V2h1V1h1V0h1v3H6v1H5v1H4v1H3v1H2V6H1V5H0z" fill="#000" />
              </svg>
            </span>
            Перезаписать исходные изображения
          </label>
        </div>
        <div className="mt-2 flex justify-end gap-[9px]">
          <button className="h-[23px] w-[75px] border border-black bg-[#d4d0c8] shadow-[inset_-1px_-1px_#404040,inset_1px_1px_#fff,inset_-2px_-2px_#808080]">
            ОК
          </button>
          <button className={clsx('h-[23px] w-[75px]', RAISED)}>Отмена</button>
        </div>
      </div>
    </section>
  )
}

const TASKS = [
  { icon: 'word', name: 'FrontPage....' },
  { icon: 'word', name: 'HTML 10 та...' },
  { icon: 'word', name: 'Front.doc [...' },
  { icon: 'word', name: 'HTML № 10...' },
  { icon: 'word', name: 'Документ3...' },
  { icon: 'mailAgent', name: 'Mail.Ru Аге...' },
]

const CELL = 'border-l border-t border-[#808080] border-r border-r-white'

function Footer() {
  return (
    <footer className="shrink-0">
      <div className="flex h-5 gap-px whitespace-nowrap border-t-2 border-[#808080] pt-[2px] leading-[15px]">
        <div className={clsx('flex-1', CELL)} />
        <div className={clsx('w-[105px]', CELL)}>0:03 при 56 кбит/с</div>
        <div className={clsx('w-[59px]', CELL)}>867 x 550</div>
        <div className={clsx('w-[83px]', CELL)}>по умолчанию</div>
        <div className={clsx('w-[63px]', CELL)}>настройка</div>
      </div>
      <div className="flex h-[30px] items-center whitespace-nowrap border-t border-white px-[2px]">
        <button className={clsx('flex h-[22px] w-[51px] shrink-0 items-center gap-[2px] pl-[2px] font-bold', RAISED)}>
          <Svg>{icons.windows}</Svg>
          Пуск
        </button>
        <div className="ml-[7px] h-5 w-[2px] border-r border-white bg-[#808080]" />
        <nav className="ml-[5px] flex min-w-0 flex-1 gap-1">
          <button className={clsx('flex h-[22px] min-w-0 flex-1 basis-0 items-center gap-1 pl-1', RAISED)}>
            <Svg>{icons.closedFolder}</Svg>
            <span>
              <b>6</b> Провод...
            </span>
            <SmallArrow />
          </button>
          {TASKS.map((t) => (
            <button
              key={t.name}
              className={clsx('flex h-[22px] min-w-0 flex-1 basis-0 items-center gap-[3px] overflow-hidden pl-1', RAISED)}
            >
              <Svg>{icons[t.icon]}</Svg>
              {t.name}
            </button>
          ))}
          <button
            className={clsx(
              'flex h-[22px] min-w-0 flex-1 basis-0 items-center gap-[3px] overflow-hidden pl-[5px] font-bold shadow-[inset_1px_1px_#404040,inset_-1px_-1px_#fff,inset_2px_2px_#808080]',
              CHECKER,
            )}
          >
            <Svg>{icons.frontPage}</Svg>
            Microsoft ...
          </button>
        </nav>
        <div className="ml-[10px] h-5 w-[2px] border-r border-white bg-[#808080]" />
        <span className="ml-2 flex h-4 w-[14px] items-center justify-center bg-[#0a246a] text-[10px] text-white">KK</span>
        <div className="ml-1 flex h-[22px] w-[113px] items-center gap-[2px] pl-[6px] shadow-[inset_1px_1px_#808080,inset_-1px_-1px_#fff]">
          <b className="text-[13px]">«</b>
          <Svg>{icons.office}</Svg>
          <Svg>{icons.envelope}</Svg>
          <Svg>{icons.eye}</Svg>
          <time className="ml-[5px]">15:53</time>
        </div>
      </div>
    </footer>
  )
}

export default function App() {
  return (
    <div className="relative flex h-screen flex-col overflow-hidden bg-[#d4d0c8] font-['DejaVu_Sans_Condensed','DejaVu_Sans',sans-serif] text-[11px] text-black">
      <Header />
      <div className="flex min-h-0 flex-1">
        <FolderPane />
        <Editor />
      </div>
      <Footer />
      <ButtonsDialog />
    </div>
  )
}
